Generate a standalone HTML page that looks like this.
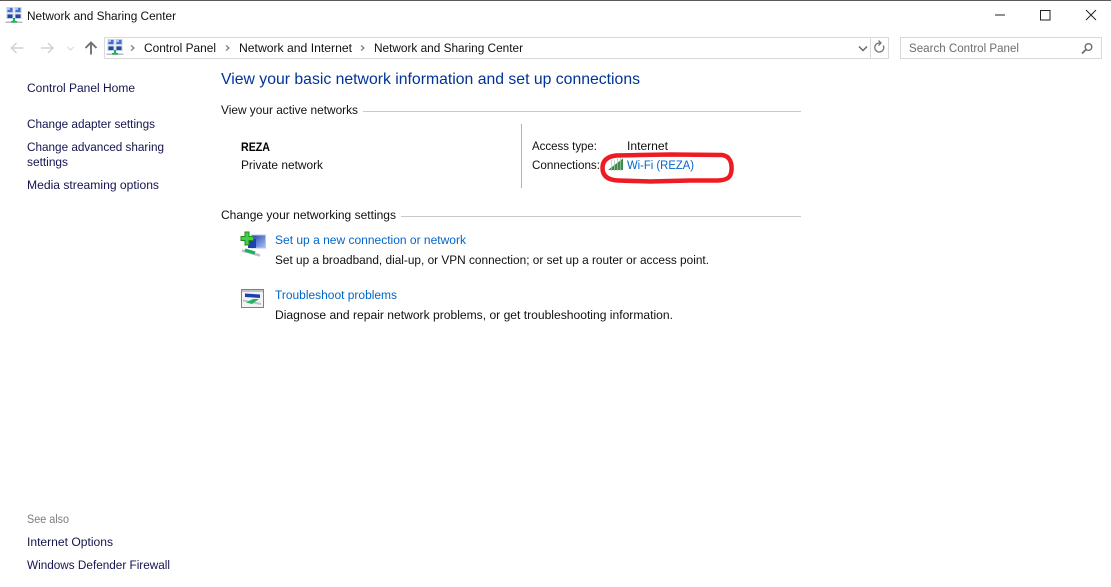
<!DOCTYPE html>
<html lang="en"><head><meta charset="utf-8"><title>Network and Sharing Center</title>
<style>
html,body{margin:0;padding:0;background:#fff;width:1111px;height:587px;overflow:hidden}
svg{display:block}
text{font-family:"Liberation Sans",sans-serif;font-size:12.4px;fill:#111}
.l{fill:#14144f}
.b{fill:#0066cc}
</style></head><body>
<svg width="1111" height="587" viewBox="0 0 1111 587" xmlns="http://www.w3.org/2000/svg">
<defs>
<g id="net">
<rect x="0.500" y="0.500" width="6" height="5" fill="#3f6fd0" stroke="#c5cfdf"/>
<rect x="1" y="1" width="2.500" height="2" fill="#a9c4f0"/>
<rect x="8.500" y="0.500" width="6" height="5" fill="#3f6fd0" stroke="#c5cfdf"/>
<rect x="9" y="1" width="2.500" height="2" fill="#a9c4f0"/>
<rect x="0.500" y="7" width="6" height="4.500" fill="#1f47a8" stroke="#c5cfdf"/>
<rect x="8.500" y="7" width="6" height="4.500" fill="#1f47a8" stroke="#c5cfdf"/>
<rect x="6.500" y="11" width="2" height="2" fill="#10a860"/>
<path d="M4.500 15.500 L7.500 12 L10.500 15.500 Z" fill="#12b565"/>
<rect x="-1" y="14.500" width="17" height="1.500" fill="#b4bcc4"/>
<rect x="4.500" y="14" width="6" height="1.500" fill="#12b565"/>
</g>
<linearGradient id="w" x1="0" y1="0" x2="1" y2="1"><stop offset="0" stop-color="#1f3fb0"/><stop offset="1" stop-color="#a9c4f4"/></linearGradient>
</defs>

<rect x="0" y="0" width="1111" height="1" fill="#5a5a5a"/>

<use href="#net" x="6.500" y="7"/>
<text x="27" y="20" textLength="149" lengthAdjust="spacingAndGlyphs" fill="#000">Network and Sharing Center</text>

<path d="M995 15h10" stroke="#222" stroke-width="1"/>
<rect x="1040.500" y="10.500" width="9.500" height="9.500" fill="none" stroke="#222" stroke-width="1"/>
<path d="M1086 10l10 10M1096 10l-10 10" stroke="#222" stroke-width="1" fill="none"/>

<g fill="none" stroke="#d0d0d0" stroke-width="1.400">
<path d="M11.500 48h12M16.500 43l-5 5 5 5"/>
<path d="M53 48H41M48 43l5 5-5 5"/>
</g>
<path d="M67.500 47l3 3 3-3" fill="none" stroke="#d6d6d6" stroke-width="1.100"/>
<path d="M91 54.500V42.500M85.500 48l5.500-5.500 5.500 5.500" fill="none" stroke="#707070" stroke-width="1.900"/>

<rect x="104.500" y="37.500" width="784" height="21" fill="#fff" stroke="#d9d9d9"/>
<path d="M870.500 38v20" stroke="#d9d9d9"/>
<use href="#net" x="107.500" y="39"/>
<g fill="none" stroke="#7a7a7a" stroke-width="1.200">
<path d="M131 45.500l3 2.500-3 2.500"/>
<path d="M226 45.500l3 2.500-3 2.500"/>
<path d="M361 45.500l3 2.500-3 2.500"/>
</g>
<text x="144" y="52" textLength="72" lengthAdjust="spacingAndGlyphs">Control Panel</text>
<text x="239" y="52" textLength="113" lengthAdjust="spacingAndGlyphs">Network and Internet</text>
<text x="374" y="52" textLength="149" lengthAdjust="spacingAndGlyphs">Network and Sharing Center</text>
<path d="M859 46.500l4 4 4-4" fill="none" stroke="#666" stroke-width="1.500"/>
<path d="M883.300 45.500a4.500 4.500 0 1 1-4-2.500h1.500M878.500 40.500l2.500 2.500-2.500 2.500" fill="none" stroke="#777" stroke-width="1.300"/>

<rect x="900.500" y="37.500" width="201" height="21" fill="#fff" stroke="#d9d9d9"/>
<text x="909" y="52" textLength="110" lengthAdjust="spacingAndGlyphs" style="fill:#6d6d6d">Search Control Panel</text>
<circle cx="1088.500" cy="47" r="3.300" fill="none" stroke="#6e6e6e" stroke-width="1.400"/>
<path d="M1086 49.500l-4 4" stroke="#6e6e6e" stroke-width="1.800"/>

<text class="l" x="27" y="92" textLength="108" lengthAdjust="spacingAndGlyphs">Control Panel Home</text>
<text class="l" x="27" y="128" textLength="128" lengthAdjust="spacingAndGlyphs">Change adapter settings</text>
<text class="l" x="27" y="151" textLength="137" lengthAdjust="spacingAndGlyphs">Change advanced sharing</text>
<text class="l" x="27" y="166" textLength="41" lengthAdjust="spacingAndGlyphs">settings</text>
<text class="l" x="27" y="189" textLength="132" lengthAdjust="spacingAndGlyphs">Media streaming options</text>
<text x="27" y="523" textLength="42" lengthAdjust="spacingAndGlyphs" style="fill:#7d7d7d">See also</text>
<text class="l" x="27" y="546" textLength="86" lengthAdjust="spacingAndGlyphs">Internet Options</text>
<text class="l" x="27" y="569" textLength="143" lengthAdjust="spacingAndGlyphs">Windows Defender Firewall</text>

<text x="221" y="84" textLength="419" lengthAdjust="spacingAndGlyphs" style="font-size:16px;fill:#003399">View your basic network information and set up connections</text>

<text x="221" y="114" textLength="137" lengthAdjust="spacingAndGlyphs">View your active networks</text>
<rect x="363" y="111" width="438" height="1" fill="#c8c8c8"/>
<text x="241" y="151" textLength="29" lengthAdjust="spacingAndGlyphs" style="font-weight:bold;fill:#000">REZA</text>
<text x="241" y="169" textLength="82" lengthAdjust="spacingAndGlyphs">Private network</text>
<rect x="521" y="124" width="1" height="64" fill="#b4b4b4"/>
<text x="532" y="150" textLength="65" lengthAdjust="spacingAndGlyphs">Access type:</text>
<text x="627" y="150" textLength="41" lengthAdjust="spacingAndGlyphs">Internet</text>
<text x="532" y="169" textLength="68" lengthAdjust="spacingAndGlyphs">Connections:</text>
<path d="M608 170L623 158.500V170Z" fill="#3f8a4a"/>
<path d="M611.500 160V171M614.500 160V171M617.500 158V171M620.500 157V171" stroke="#a9cdb0" stroke-width=".7"/>
<text class="b" x="627" y="169" textLength="67" lengthAdjust="spacingAndGlyphs">Wi-Fi (REZA)</text>
<path d="M616 155.500L640 155L670 154.500L722 155C730 156 732 163 731.500 170C731 177 728 180 718 180.500L690 180.500L650 181.500L618 180.500C608 180 602.500 176 602.500 168C602.500 160 608 156.500 616 155.500Z" fill="none" stroke="#ed1c24" stroke-width="4.500"/>

<text x="221" y="219" textLength="175" lengthAdjust="spacingAndGlyphs">Change your networking settings</text>
<rect x="401" y="216" width="400" height="1" fill="#c8c8c8"/>

<g>
<rect x="251.500" y="235" width="14" height="13" fill="url(#w)" stroke="#b9c6e2"/>
<rect x="248" y="239" width="8" height="9" fill="#1f3fb0"/>
<path d="M245 232h4v4.500h4.500v4H249v4.500h-4v-4.500h-4v-4h4z" fill="#45cf45" stroke="#1f8a1f"/>
<path d="M242 250.500l18 5" stroke="#b9c2c4" stroke-width="2.500"/>
<path d="M245 250l10 3" stroke="#1fae5f" stroke-width="3.200"/>
</g>
<text class="b" x="275" y="244" textLength="191" lengthAdjust="spacingAndGlyphs">Set up a new connection or network</text>
<text x="275" y="264" textLength="434" lengthAdjust="spacingAndGlyphs">Set up a broadband, dial-up, or VPN connection; or set up a router or access point.</text>

<g>
<rect x="241.500" y="289.500" width="22" height="18" fill="#f2f4f4" stroke="#808080"/>
<rect x="242" y="290" width="21" height="2" fill="#c0c4c4"/>
<path d="M245 293.500l15 1v3.500L245 297z" fill="#1f3fb0"/>
<path d="M243 300.500l18 3.500" stroke="#bbc4c4" stroke-width="2"/>
<path d="M246 302.500l7-3.500h6l-7 5z" fill="#1fb562"/>
</g>
<text class="b" x="275" y="299" textLength="122" lengthAdjust="spacingAndGlyphs">Troubleshoot problems</text>
<text x="275" y="319" textLength="398" lengthAdjust="spacingAndGlyphs">Diagnose and repair network problems, or get troubleshooting information.</text>
</svg>
</body></html>
